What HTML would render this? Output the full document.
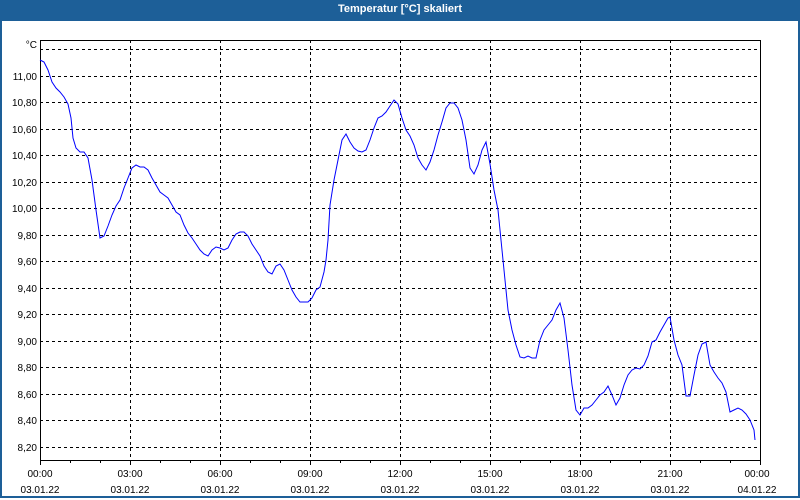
<!DOCTYPE html>
<html><head><style>
html,body{margin:0;padding:0;width:800px;height:500px;overflow:hidden;background:#fff;font-family:"Liberation Sans",sans-serif}
.win{position:absolute;left:0;top:0;width:796px;height:496px;border:2px solid #1d5f98;border-top:none}
.title{position:absolute;left:0;top:0;width:800px;height:21px;background:#1d5f98;color:#fff;font:bold 11px "Liberation Sans",sans-serif;text-align:center;line-height:19px}
svg{position:absolute;left:0;top:0}
text{font-family:"Liberation Sans",sans-serif;font-size:10px;fill:#000}
</style></head><body>
<div class="win"></div>
<div class="title">Temperatur [°C] skaliert</div>
<svg width="800" height="500">
<g stroke="#000" stroke-dasharray="3,3" stroke-width="1">
<line x1="40" x2="760" y1="49.5" y2="49.5"/><line x1="40" x2="760" y1="76.5" y2="76.5"/><line x1="40" x2="760" y1="102.5" y2="102.5"/><line x1="40" x2="760" y1="129.5" y2="129.5"/><line x1="40" x2="760" y1="155.5" y2="155.5"/><line x1="40" x2="760" y1="182.5" y2="182.5"/><line x1="40" x2="760" y1="208.5" y2="208.5"/><line x1="40" x2="760" y1="235.5" y2="235.5"/><line x1="40" x2="760" y1="261.5" y2="261.5"/><line x1="40" x2="760" y1="288.5" y2="288.5"/><line x1="40" x2="760" y1="314.5" y2="314.5"/><line x1="40" x2="760" y1="341.5" y2="341.5"/><line x1="40" x2="760" y1="367.5" y2="367.5"/><line x1="40" x2="760" y1="394.5" y2="394.5"/><line x1="40" x2="760" y1="420.5" y2="420.5"/><line x1="40" x2="760" y1="447.5" y2="447.5"/>
<line y1="40" y2="460" x1="130.5" x2="130.5"/><line y1="40" y2="460" x1="220.5" x2="220.5"/><line y1="40" y2="460" x1="310.5" x2="310.5"/><line y1="40" y2="460" x1="400.5" x2="400.5"/><line y1="40" y2="460" x1="490.5" x2="490.5"/><line y1="40" y2="460" x1="580.5" x2="580.5"/><line y1="40" y2="460" x1="670.5" x2="670.5"/>
</g>
<path d="M40.5 40.5H760.5V460.5H40.5Z" fill="none" stroke="#000"/>
<g stroke="#000">
<line x1="40.5" x2="40.5" y1="460" y2="465"/><line x1="70.5" x2="70.5" y1="460" y2="463"/><line x1="100.5" x2="100.5" y1="460" y2="463"/><line x1="130.5" x2="130.5" y1="460" y2="465"/><line x1="160.5" x2="160.5" y1="460" y2="463"/><line x1="190.5" x2="190.5" y1="460" y2="463"/><line x1="220.5" x2="220.5" y1="460" y2="465"/><line x1="250.5" x2="250.5" y1="460" y2="463"/><line x1="280.5" x2="280.5" y1="460" y2="463"/><line x1="310.5" x2="310.5" y1="460" y2="465"/><line x1="340.5" x2="340.5" y1="460" y2="463"/><line x1="370.5" x2="370.5" y1="460" y2="463"/><line x1="400.5" x2="400.5" y1="460" y2="465"/><line x1="430.5" x2="430.5" y1="460" y2="463"/><line x1="460.5" x2="460.5" y1="460" y2="463"/><line x1="490.5" x2="490.5" y1="460" y2="465"/><line x1="520.5" x2="520.5" y1="460" y2="463"/><line x1="550.5" x2="550.5" y1="460" y2="463"/><line x1="580.5" x2="580.5" y1="460" y2="465"/><line x1="610.5" x2="610.5" y1="460" y2="463"/><line x1="640.5" x2="640.5" y1="460" y2="463"/><line x1="670.5" x2="670.5" y1="460" y2="465"/><line x1="700.5" x2="700.5" y1="460" y2="463"/><line x1="730.5" x2="730.5" y1="460" y2="463"/><line x1="760.5" x2="760.5" y1="460" y2="465"/>
</g>
<g text-anchor="end">
<text x="37" y="48">°C</text>
<text x="37" y="80">11,00</text><text x="37" y="106">10,80</text><text x="37" y="133">10,60</text><text x="37" y="159">10,40</text><text x="37" y="186">10,20</text><text x="37" y="212">10,00</text><text x="37" y="239">9,80</text><text x="37" y="265">9,60</text><text x="37" y="292">9,40</text><text x="37" y="318">9,20</text><text x="37" y="345">9,00</text><text x="37" y="371">8,80</text><text x="37" y="398">8,60</text><text x="37" y="424">8,40</text><text x="37" y="451">8,20</text>
</g>
<g text-anchor="middle">
<text x="40" y="477">00:00</text><text x="40" y="493">03.01.22</text>
<text x="130" y="477">03:00</text><text x="130" y="493">03.01.22</text>
<text x="220" y="477">06:00</text><text x="220" y="493">03.01.22</text>
<text x="310" y="477">09:00</text><text x="310" y="493">03.01.22</text>
<text x="400" y="477">12:00</text><text x="400" y="493">03.01.22</text>
<text x="490" y="477">15:00</text><text x="490" y="493">03.01.22</text>
<text x="580" y="477">18:00</text><text x="580" y="493">03.01.22</text>
<text x="670" y="477">21:00</text><text x="670" y="493">03.01.22</text>
<text x="757" y="477">00:00</text><text x="757" y="493">04.01.22</text>
</g>
<polyline fill="none" stroke="#0000ff" stroke-width="1" points="40,60 44,62 48,70 52,82 56,88 60,92 64,97 68,104 71,118 73,138 76,148 80,152 84,152 88,158 92,180 96,210 100,238 104,236 108,226 112,215 116,206 120,200 124,188 128,178 132,168 136,165 140,167 144,167 148,170 152,178 156,185 160,192 164,195 168,198 172,205 176,212 180,215 184,225 188,233 192,238 196,244 200,250 204,254 208,256 212,250 216,247 220,248 224,250 228,248 232,240 236,234 240,232 244,232 248,236 252,244 256,250 260,256 264,266 268,272 272,274 276,266 280,264 284,270 288,280 292,290 296,297 300,302 304,302 308,302 312,298 316,290 320,287 324,272 326,260 328,240 330,205 334,180 338,160 342,140 346,134 350,142 354,148 358,151 362,152 366,150 370,140 374,128 378,118 382,116 386,112 390,106 394,100 398,104 402,118 406,130 410,136 414,145 418,158 422,165 426,170 430,162 434,150 438,135 442,122 446,108 450,103 454,103 458,108 462,120 466,140 470,168 474,174 478,165 482,150 486,142 490,164 494,190 498,210 500,230 504,270 508,310 512,330 516,345 520,357 524,358 528,356 532,358 536,358 540,340 544,330 548,325 552,320 556,310 560,303 564,318 568,350 572,385 576,410 580,415 584,408 588,408 592,405 596,400 600,395 604,392 608,386 612,395 616,405 620,398 624,385 628,375 632,370 636,368 640,369 644,365 648,356 652,342 656,340 660,332 664,325 668,318 670,317 674,340 678,355 682,365 686,396 690,396 694,375 698,355 702,344 706,342 710,365 714,372 718,378 722,383 726,392 730,412 734,410 738,408 742,410 746,414 750,420 754,430 755,440"/>
</svg>
</body></html>
